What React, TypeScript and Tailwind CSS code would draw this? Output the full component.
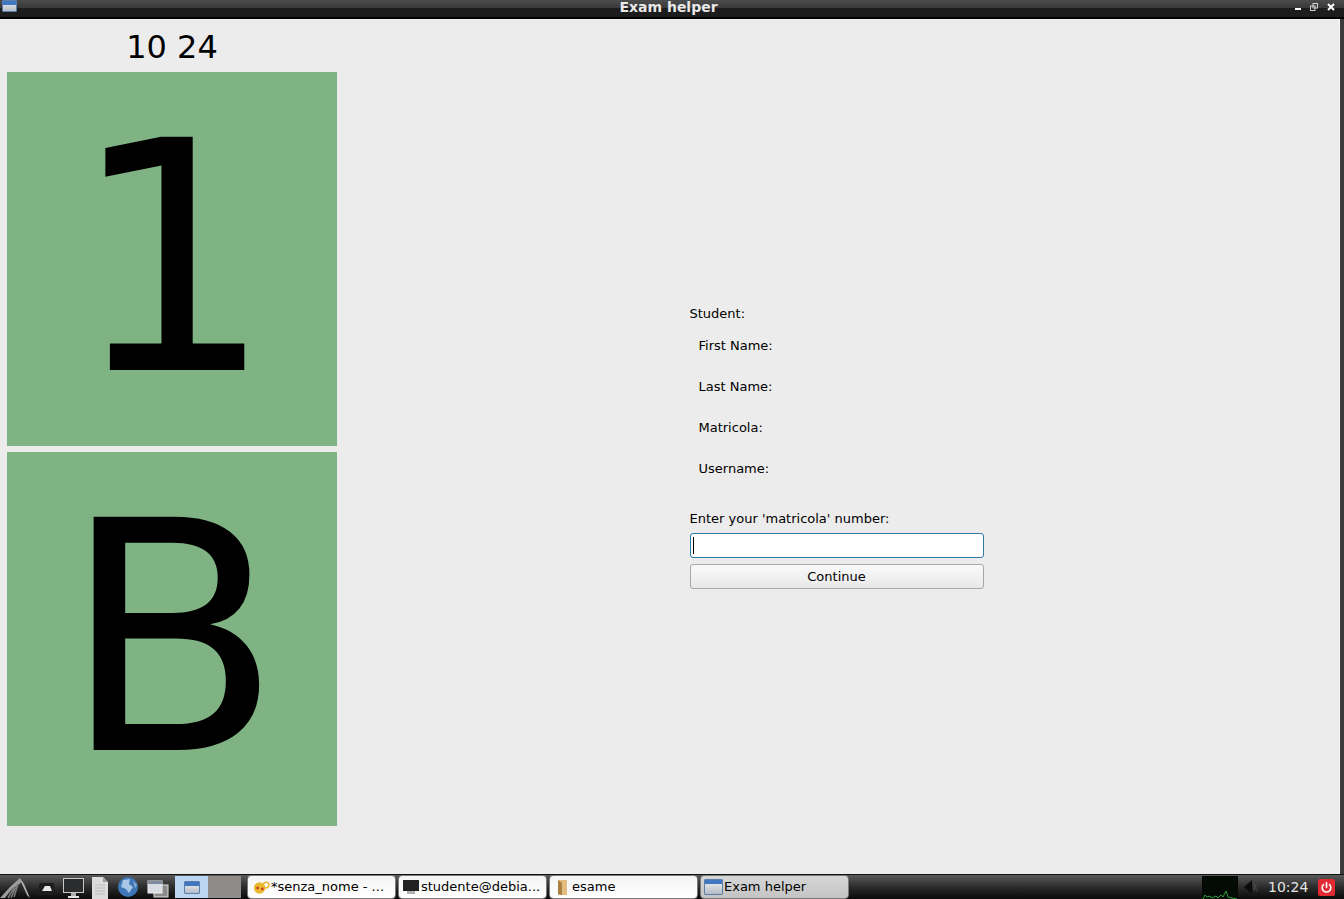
const dejavu = "font-['DejaVu_Sans',sans-serif]";

const AppIcon = ({ className }: { className: string }) => (
  <div className={`${className} shrink-0 border border-[#5b7fa8] bg-gradient-to-b from-[#f2f2f2] to-[#b4bcc6] rounded-[1px] overflow-hidden`}>
    <div className="h-[4px] bg-[#3f78c0]" />
  </div>
);

const LauncherIcons = () => (
  <div className="flex items-center h-full">
    {/* Menu logo */}
    <svg width="34" height="25" viewBox="0 0 34 25" className="shrink-0">
      <path d="M0 23 L10 12 L20 3 L22 7 L12 14 L5 23 Z" fill="#9c9c9c" />
      <path d="M8 23 L14 13 M11 23 L16 11 M14 22 L18 9" stroke="#7c7c7c" strokeWidth="1.5" fill="none" />
      <path d="M20 3 L24 9 L30 23 L27 20 L22 9 Z" fill="#b4b4b4" />
    </svg>
    {/* Files */}
    <svg width="26" height="25" viewBox="0 0 26 25" className="shrink-0">
      <rect x="5" y="8" width="15" height="12" rx="2" fill="#1d1d1d" />
      <path d="M8 16 L11 11 L16 11 L18 16 Z" fill="#e8e8e8" />
    </svg>
    {/* Monitor */}
    <svg width="26" height="25" viewBox="0 0 26 25" className="shrink-0">
      <rect x="3" y="3" width="21" height="15" fill="#c8c8c8" />
      <rect x="4" y="4" width="19" height="13" fill="#2a2c2e" />
      <rect x="11" y="18" width="5" height="3" fill="#b0b0b0" />
      <rect x="8" y="21" width="11" height="2" fill="#e2e2e2" />
    </svg>
    {/* Document */}
    <svg width="28" height="25" viewBox="0 0 28 25" className="shrink-0">
      <path d="M6 2 H17 L22 7 V24 H6 Z" fill="#dcdcdc" />
      <path d="M17 2 L22 7 H17 Z" fill="#9a9a9a" />
      <path d="M9 10 H19 M9 13 H19 M9 16 H19 M9 19 H19" stroke="#bbbbbb" />
    </svg>
    {/* Globe */}
    <svg width="27" height="25" viewBox="0 0 27 25" className="shrink-0">
      <circle cx="14" cy="12" r="10" fill="#3f76b8" />
      <path d="M9 5 L16 4 L15 9 L19 12 L15 18 L12 14 L7 12 Z" fill="#a9c6e6" />
      <path d="M19 6 L23 10 L21 13 Z" fill="#8db0d8" />
    </svg>
    {/* Windows */}
    <svg width="34" height="25" viewBox="0 0 34 25" className="shrink-0">
      <rect x="13" y="10" width="14" height="12" fill="#8b8b8b" stroke="#dddddd" />
      <rect x="7" y="6" width="14" height="12" fill="#d8dde3" stroke="#f0f0f0" />
      <rect x="7" y="6" width="14" height="3" fill="#7f8c9c" />
    </svg>
    {/* Active workspace */}
    <div className="w-[33px] h-[22px] bg-[#bcd6f2] flex items-center justify-center shrink-0">
      <AppIcon className="w-[16px] h-[13px]" />
    </div>
    <div className="w-[33px] h-[22px] bg-[#8f8b88] shrink-0" />
  </div>
);

const TaskButton = ({ icon, label, active }: { icon: React.ReactNode; label: string; active?: boolean }) => (
  <div
    className={`w-[149px] h-[24px] mr-[2px] shrink-0 flex items-center pl-[3px] gap-[1px] rounded-[4px] border border-[#7a7a7a] text-[13px] text-black ${dejavu} ${
      active ? "bg-gradient-to-b from-[#d6d6d6] to-[#c4c4c4]" : "bg-gradient-to-b from-[#f4f4f4] to-[#ffffff]"
    }`}
  >
    {icon}
    <span className="whitespace-nowrap">{label}</span>
  </div>
);

const Card = ({ char }: { char: string }) => (
  <div className="w-[330px] h-[374px] bg-[#80b384] flex items-center justify-center overflow-hidden">
    <span className={`text-[320px] leading-none text-black ${dejavu}`}>{char}</span>
  </div>
);

export default function App() {
  return (
    <div className={`w-[1344px] h-[899px] flex flex-col overflow-hidden bg-[#ececec] ${dejavu}`}>
      {/* Title bar */}
      <div className="h-[19px] shrink-0 flex items-center bg-gradient-to-b from-[#4c4c4c] via-[#3a3a3a] via-45% to-[#1c1c1c] to-50% border-b-[2px] border-black">
        <AppIcon className="w-[15px] h-[12px] ml-[2px] self-start" />
        <span className="flex-1 text-center text-[14px] leading-[15px] font-bold text-[#e8e8e8] -mt-[3px] pl-[25px]">Exam helper</span>
        <div className="flex items-center gap-[9px] pr-[9px] -mt-[3px] text-white">
          <div className="w-[6px] h-[2px] bg-white mt-[3px]" />
          <svg width="8" height="8" viewBox="0 0 8 8">
            <rect x="3" y="0.5" width="4.5" height="4.5" fill="none" stroke="#cfcfcf" />
            <rect x="0.5" y="3" width="4.5" height="4.5" fill="none" stroke="#cfcfcf" />
          </svg>
          <svg width="8" height="8" viewBox="0 0 8 8">
            <path d="M1 1 L7 7 M7 1 L1 7" stroke="#ffffff" strokeWidth="2" />
          </svg>
        </div>
      </div>

      {/* Window content, with the dark frame on its right */}
      <div className="flex-1 flex min-h-0 border-r-[4px] border-[#3c3c3e]">
        <div className="flex-1 flex min-w-0 border-r border-[#f8f8f8]">
          <div className="w-[344px] shrink-0 flex flex-col items-center">
            <div className="h-[53px] flex items-center justify-center text-[32px] leading-none text-black pt-[3px]">10 24</div>
            <div className="flex flex-col gap-[6px]">
              <Card char="1" />
              <Card char="B" />
            </div>
          </div>
          <div className="flex-1 flex items-center justify-center">
            <div className="w-[294px] -ml-[10px] mt-[1px] flex flex-col text-[13px] text-black leading-[16px]">
              <div>Student:</div>
              <div className="pl-[9px] pt-[16px] flex flex-col gap-[25px]">
                <div>First Name:</div>
                <div>Last Name:</div>
                <div>Matricola:</div>
                <div>Username:</div>
              </div>
              <div className="mt-[34px]">Enter your 'matricola' number:</div>
              <div className="mt-[6px] h-[25px] bg-white border border-[#2f78a8] rounded-[3px] flex items-center pl-[2px]">
                <div className="w-px h-[17px] bg-black" />
              </div>
              <button className="mt-[6px] h-[25px] pt-[1px] rounded-[3px] border border-[#a8a8a8] bg-gradient-to-b from-[#fafafa] to-[#e8e8e8] text-[13px] text-black">
                Continue
              </button>
            </div>
          </div>
        </div>
      </div>

      {/* Taskbar */}
      <div className="h-[25px] shrink-0 flex items-center bg-gradient-to-b from-[#5a5a5a] via-[#2c2c2c] to-[#0a0a0a] border-t border-[#111111]">
        <LauncherIcons />
        <div className="w-[6px] shrink-0" />
        <TaskButton
          label="*senza_nome - ..."
          icon={
            <svg width="19" height="18" viewBox="0 0 20 18" className="shrink-0">
              <circle cx="9" cy="10" r="6" fill="#e8b82e" />
              <circle cx="7" cy="10" r="1.5" fill="#d43a2a" />
              <circle cx="12" cy="11" r="1.5" fill="#d43a2a" />
              <circle cx="16" cy="7" r="3" fill="none" stroke="#e8b82e" strokeWidth="1.5" />
            </svg>
          }
        />
        <TaskButton
          label="studente@debia..."
          icon={
            <svg width="18" height="18" viewBox="0 0 18 18" className="shrink-0">
              <rect x="1" y="2" width="16" height="11" fill="#222222" />
              <rect x="5" y="13" width="8" height="3" fill="#b0b0b0" />
            </svg>
          }
        />
        <TaskButton
          label="esame"
          icon={
            <svg width="18" height="18" viewBox="0 0 18 18" className="shrink-0">
              <path d="M5 2 H14 V17 H5 Z" fill="#e3bd7e" />
              <path d="M5 2 L9 5 V17 L5 16 Z" fill="#a97f42" />
            </svg>
          }
        />
        <TaskButton active label="Exam helper" icon={<AppIcon className="w-[19px] h-[16px]" />} />
        <div className="flex-1" />
        <div className="w-[36px] h-[23px] bg-[#040a04] shrink-0 self-end">
          <svg width="36" height="23" viewBox="0 0 36 23">
            <path d="M1 23 L3 19 L5 21 L8 20 L10 22 L14 20 L16 22 L19 19 L21 21 L24 15 L26 21 L30 22 L35 23" fill="none" stroke="#2e9e3a" />
          </svg>
        </div>
        {/* Volume */}
        <svg width="20" height="20" viewBox="0 0 20 20" className="ml-[2px] shrink-0">
          <path d="M4 10 L12 3 V17 Z" fill="#0c0c0c" />
          <path d="M14 7 Q16 10 14 13" fill="none" stroke="#555555" strokeWidth="1.2" />
          <path d="M16 5 Q19 10 16 15" fill="none" stroke="#3c3c3c" strokeWidth="1.2" />
        </svg>
        <span className={`ml-[8px] w-[46px] text-[14px] text-[#e4e4e4] ${dejavu}`}>10:24</span>
        <div className="ml-[4px] mr-[9px] w-[17px] h-[17px] rounded-[2px] bg-[#e22a33] flex items-center justify-center shrink-0">
          <svg width="13" height="13" viewBox="0 0 24 24" fill="none" stroke="#ffffff" strokeWidth="3" strokeLinecap="round">
            <path d="M12 3 V12" />
            <path d="M6.5 6.5 A8 8 0 1 0 17.5 6.5" />
          </svg>
        </div>
      </div>
    </div>
  );
}
